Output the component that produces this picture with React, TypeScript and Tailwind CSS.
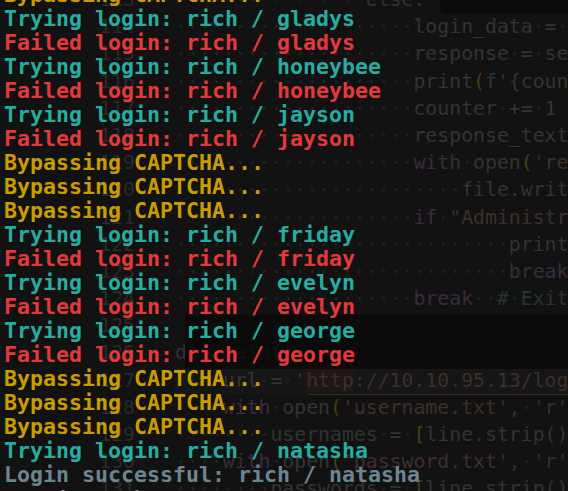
const mono = "font-['DejaVu_Sans_Mono','Liberation_Mono',monospace]";

type Tok = [string, string];

// faint editor colours
const G = "text-[#333333]";
const P = "text-[#3a2b3d]";
const Y = "text-[#4a3d12]";
const B = "text-[#24384a]";
const S = "text-[#3d2f2a]";
const C = "text-[#27362a]";

const Code = ({ indent = 0, toks = [] as Tok[], hl = false }) => {
	const parts: React.ReactNode[] = [];
	for (let i = 0; i < indent; i++) {
		parts.push(
			<span key={"i" + i} className="text-[#212121]">
				·
			</span>
		);
	}
	toks.forEach(([t, cls], ti) => {
		t.split("").forEach((ch, ci) =>
			parts.push(
				<span key={ti + "-" + ci} className={ch === " " ? "text-[#212121]" : cls}>
					{ch === " " ? "·" : ch}
				</span>
			)
		);
	});
	return <div className={`whitespace-pre h-[27.2px] ${hl ? "bg-[#161616]" : ""}`}>{parts}</div>;
};

const editor: { n: number; indent: number; toks: Tok[] }[] = [
	{ n: 113, indent: 16, toks: [["else:", P]] },
	{ n: 114, indent: 20, toks: [["login_data = {'username': username}", G]] },
	{ n: 115, indent: 20, toks: [["response = session.post(url, data=login_data)", G]] },
	{ n: 116, indent: 20, toks: [["print", G], ["(", Y], ["f'", B], ["{", P], ["counter}: Trying", G]] },
	{ n: 117, indent: 20, toks: [["counter += 1", G]] },
	{ n: 118, indent: 20, toks: [["response_text = response.text", G]] },
	{ n: 119, indent: 20, toks: [["with", P], [" open", G], ["(", Y], ["'response.html'", S]] },
	{ n: 120, indent: 24, toks: [["file.write(response_text)", G]] },
	{ n: 121, indent: 20, toks: [["if", P], [' "Administrator" in', S]] },
	{ n: 122, indent: 28, toks: [["print(f'Success')", G]] },
	{ n: 123, indent: 28, toks: [["break", P]] },
	{ n: 124, indent: 20, toks: [["break", P], ["  # Exit the loop", C]] },
	{ n: 125, indent: 0, toks: [] },
	{ n: 126, indent: 0, toks: [["def", P], [" main", G], ["():", Y]] },
	{ n: 127, indent: 4, toks: [["url = ", G], ["'", S], ["http", "text-[#3d2f2a] bg-[#1e1714]"], ["://10.10.95.13/login'", S]] },
	{ n: 128, indent: 4, toks: [["with", P], [" open", G], ["(", Y], ["'username.txt'", S], [", ", G], ["'r'", S], [")", Y]] },
	{ n: 129, indent: 8, toks: [["usernames = ", G], ["[", Y], ["line.strip", G], ["()", P], [" for line in f", G], ["]", Y]] },
	{ n: 130, indent: 4, toks: [["with", P], [" open", G], ["(", Y], ["'password.txt'", S], [", ", G], ["'r'", S], [")", Y]] },
	{ n: 131, indent: 8, toks: [["passwords = ", G], ["[", Y], ["line.strip", G], ["()", P], [" for line in f", G], ["]", Y]] },
];

const TEAL = "text-[#28aca1]";
const RED = "text-[#e23a3a]";
const GOLD = "text-[#c99c00]";
const GREY = "text-[#6b8692]";

const term: [string, string][] = [
	["Bypassing CAPTCHA...", GOLD],
	["Trying login: rich / gladys", TEAL],
	["Failed login: rich / gladys", RED],
	["Trying login: rich / honeybee", TEAL],
	["Failed login: rich / honeybee", RED],
	["Trying login: rich / jayson", TEAL],
	["Failed login: rich / jayson", RED],
	["Bypassing CAPTCHA...", GOLD],
	["Bypassing CAPTCHA...", GOLD],
	["Bypassing CAPTCHA...", GOLD],
	["Trying login: rich / friday", TEAL],
	["Failed login: rich / friday", RED],
	["Trying login: rich / evelyn", TEAL],
	["Failed login: rich / evelyn", RED],
	["Trying login: rich / george", TEAL],
	["Failed login: rich / george", RED],
	["Bypassing CAPTCHA...", GOLD],
	["Bypassing CAPTCHA...", GOLD],
	["Bypassing CAPTCHA...", GOLD],
	["Trying login: rich / natasha", TEAL],
	["Login successful: rich / natasha", GREY],
];

export default function App() {
	return (
		<div className="relative w-[568px] h-[491px] overflow-hidden bg-[#121212]">
			{/* editor behind the terminal */}
			<div className={`flex -mt-[14px] text-[19.8px] leading-[27.2px] ${mono}`}>
				<div className="w-[140px] shrink-0 pr-[5px] text-right text-[#2a2a2a]">
					{editor.map((l) => (
						<div key={l.n} className="h-[27.2px]">
							{l.n}
						</div>
					))}
				</div>
				<div className="pl-[35px] flex-1 min-w-0">
					{editor.map((l) => (
						<Code key={l.n} indent={l.indent} toks={l.toks} hl={l.n === 127} />
					))}
				</div>
			</div>

			{/* dark panels of the editor */}
			<div className="absolute left-[440px] top-0 w-[128px] h-[14px] rounded-bl-md bg-[#0b0b0b]" />
			<div className="absolute left-[185px] top-[315px] right-0 h-[54px] bg-[#0a0a0a]/80" />
			<div className="absolute left-[307px] top-[394px] right-0 h-px bg-[#3a2a22]" />

			{/* terminal output */}
			<div className={`absolute left-[4px] top-[-17.5px] text-[21.6px] leading-[24px] font-bold whitespace-pre ${mono}`}>
				{term.map(([t, c], i) => (
					<div key={i} className={c}>
						{t}
					</div>
				))}
				<div className="mt-[2px] text-[#e23a3a]">
					(<span className="text-[#ddd]">kali㉿kali</span>)-[<span className="text-[#ddd]">~/Desktop</span>]
				</div>
			</div>
		</div>
	);
}
